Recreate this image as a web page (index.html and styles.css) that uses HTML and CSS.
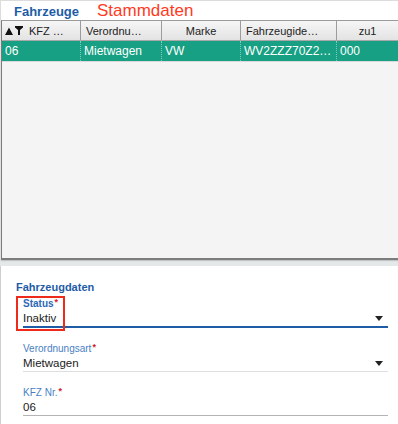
FILE: index.html
```html
<!DOCTYPE html>
<html lang="de">
<head>
<meta charset="utf-8">
<title>Fahrzeuge</title>
<link rel="stylesheet" href="styles.css">
</head>
<body>
<div class="app">
  <div class="titlebar">
    <span class="title-main">Fahrzeuge</span>
    <span class="title-sub">Stammdaten</span>
  </div>

  <div class="grid">
    <div class="row head">
      <div class="cell c1">
        <span class="sort">
          <svg width="8" height="8" viewBox="0 0 8 8"><path d="M0 8 L4 0.5 L8 8 Z" fill="#111"/></svg>
          <svg width="8" height="9" viewBox="0 0 8 9"><path d="M0 0 H8 V1.5 L5 4 V9 H3 V4 L0 1.5 Z" fill="#111"/></svg>
        </span>
        KFZ …
      </div>
      <div class="cell c2">Verordnu…</div>
      <div class="cell c3 center">Marke</div>
      <div class="cell c4">Fahrzeugide…</div>
      <div class="cell c5 center">zu1</div>
    </div>
    <div class="row data selected">
      <div class="cell c1">06</div>
      <div class="cell c2">Mietwagen</div>
      <div class="cell c3">VW</div>
      <div class="cell c4">WV2ZZZ70Z2…</div>
      <div class="cell c5">000</div>
    </div>
    <div class="grid-body"></div>
  </div>

  <div class="form">
    <div class="section-title">Fahrzeugdaten</div>

    <div class="field focused">
      <div class="label strong">Status<span class="req">*</span></div>
      <div class="value">Inaktiv<span class="caret"></span></div>
      <div class="highlight"></div>
    </div>

    <div class="field">
      <div class="label">Verordnungsart<span class="req">*</span></div>
      <div class="value">Mietwagen<span class="caret"></span></div>
    </div>

    <div class="field plain">
      <div class="label">KFZ Nr.<span class="req">*</span></div>
      <div class="value">06</div>
    </div>
  </div>
</div>
</body>
</html>
```

FILE: styles.css
```css
html, body {
  margin: 0;
  padding: 0;
}

body {
  background: #e4e8e8;
  font-family: "Liberation Sans", Arial, sans-serif;
  color: #222;
  width: 398px;
  height: 424px;
  overflow: hidden;
}

.app {
  display: flex;
  flex-direction: column;
}

.titlebar {
  height: 19px;
  background: #fff;
  border-top: 1px solid #dcdcdc;
  border-left: 1px solid #dcdcdc;
  display: flex;
  align-items: center;
  padding-left: 13px;
  gap: 18px;
}

.title-main {
  font-weight: bold;
  font-size: 13px;
  color: #1e5ca6;
  position: relative;
  top: 1px;
}

.title-sub {
  font-size: 17px;
  color: #ff3a22;
  position: relative;
  top: 0;
}

.grid {
  margin-left: 1px;
  border-left: 1px solid #7a7a7a;
  border-top: 1px solid #9a9a9a;
  border-bottom: 2px solid #7c7c7c;
  background: #f4f4f4;
  height: 237px;
  display: flex;
  flex-direction: column;
  box-shadow: 0 1px 1px rgba(0,0,0,0.15);
}

.row {
  display: grid;
  grid-template-columns: 79px 81px 79px 96px 1fr;
}

.row.head {
  height: 19px;
  background: linear-gradient(#f6f6f6, #e3e3e3);
  border-bottom: 1px solid #a8a8a8;
  font-size: 11px;
  color: #222;
}

.row.head .cell {
  border-right: 1px solid #9c9c9c;
  display: flex;
  align-items: center;
  padding-left: 5px;
  white-space: nowrap;
  overflow: hidden;
}

.row.head .cell.c5 { border-right: none; }

.row.head .cell.center {
  justify-content: center;
  padding-left: 0;
}

.sort {
  display: inline-flex;
  align-items: center;
  gap: 2px;
  margin-right: 6px;
  margin-left: -2px;
}

.row.data {
  height: 20px;
  font-size: 12px;
  border-bottom: 1px solid #d8d8d8;
}

.row.data.selected {
  background: #17a083;
  color: #fff;
}

.row.data .cell {
  display: flex;
  align-items: center;
  padding-left: 3px;
  border-right: 1px dotted #7fcdb9;
  white-space: nowrap;
  overflow: hidden;
}

.row.data .cell.c5 { border-right: none; }

.grid-body {
  flex: 1;
}

.form {
  margin-top: 6px;
  background: #fff;
  border-left: 1px solid #cfcfcf;
  height: 160px;
  padding: 14px 10px 0 15px;
}

.section-title {
  font-weight: bold;
  font-size: 11px;
  color: #1e5ca6;
  line-height: 14px;
}

.field {
  position: relative;
  margin-left: 7px;
  margin-top: 15px;
  border-bottom: 1px solid #dedede;
}

.field.focused {
  margin-top: 4px;
  border-bottom: 2px solid #1e5ca6;
}

.field.plain {
  border-bottom: 1px solid #b4b4b4;
}

.label {
  font-size: 10px;
  line-height: 12px;
  color: #4a7fc4;
}

.label.strong {
  font-weight: bold;
  color: #2b68b4;
}

.req {
  color: #d0202a;
  margin-left: 1px;
  font-weight: bold;
  font-size: 9px;
  position: relative;
  top: -2px;
}

.value {
  font-size: 11.5px;
  line-height: 16px;
  color: #222;
  display: flex;
  align-items: center;
  justify-content: space-between;
}

.caret {
  width: 0;
  height: 0;
  border-left: 4px solid transparent;
  border-right: 4px solid transparent;
  border-top: 5px solid #222;
  margin-right: 5px;
}

.highlight {
  position: absolute;
  left: -7px;
  top: -2px;
  width: 45px;
  height: 31px;
  border: 2px solid #ee2a1a;
}
```
